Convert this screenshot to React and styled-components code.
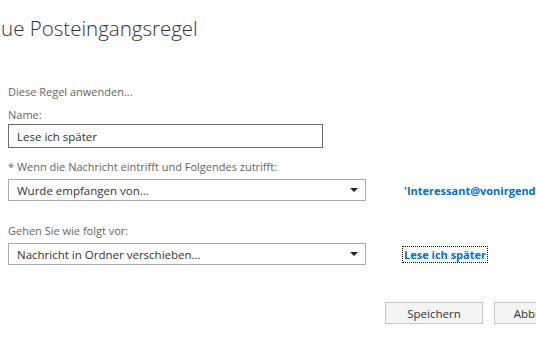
import styled, { createGlobalStyle } from 'styled-components';

const GlobalStyle = createGlobalStyle`
  html, body {
    margin: 0;
    padding: 0;
    background: #ffffff;
    overflow: hidden;
  }
  body {
    font-family: "Open Sans", "Noto Sans", "Liberation Sans", sans-serif;
  }
`;

function App() {
  return (
    <>
      <GlobalStyle />
      <Dialog>
        <Title>Neue Posteingangsregel</Title>
        <Form>
          <Hint>Diese Regel anwenden...</Hint>
          <Label>Name:</Label>
          <TextInput defaultValue="Lese ich später" />
          <Label $gap={11}>* Wenn die Nachricht eintrifft und Folgendes zutrifft:</Label>
          <Row>
            <Select>
              <span>Wurde empfangen von...</span>
              <Arrow />
            </Select>
            <ValueLink>'Interessant@vonirgendwo.de'</ValueLink>
          </Row>
          <Label $gap={22}>Gehen Sie wie folgt vor:</Label>
          <Row>
            <Select>
              <span>Nachricht in Ordner verschieben...</span>
              <Arrow />
            </Select>
            <ValueLink $focused>Lese ich später</ValueLink>
          </Row>
        </Form>
        <Buttons>
          <Button>Speichern</Button>
          <Button>Abbrechen</Button>
        </Buttons>
      </Dialog>
    </>
  );
}

export default App;

const Dialog = styled.div`
  width: 640px;
  padding: 14px 0 0 8px;
`;

const Title = styled.h1`
  margin: 0 0 0 -33px;
  font-family: "Open Sans", "Noto Sans", sans-serif;
  font-weight: 300;
  font-size: 20.5px;
  line-height: 28px;
  color: #333333;
  white-space: nowrap;
`;

const Form = styled.div`
  display: flex;
  flex-direction: column;
  margin-top: 42px;
`;

const Hint = styled.div`
  font-size: 11px;
  line-height: 16px;
  color: #666666;
`;

const Label = styled.div`
  margin-top: ${(p) => p.$gap || 7}px;
  margin-bottom: 1px;
  font-size: 11px;
  line-height: 16px;
  color: #666666;
`;

const TextInput = styled.input`
  box-sizing: border-box;
  width: 315px;
  height: 24px;
  margin: 0;
  padding: 0 8px;
  border: 1px solid #6b6b6b;
  border-radius: 0;
  font-family: inherit;
  font-size: 11.5px;
  color: #333333;
  outline: none;
`;

const Row = styled.div`
  display: flex;
  align-items: center;
  margin-top: 3px;
`;

const Select = styled.div`
  box-sizing: border-box;
  display: flex;
  align-items: center;
  justify-content: space-between;
  width: 358px;
  height: 22px;
  padding: 0 7px 0 8px;
  border: 1px solid #ababab;
  font-size: 11.5px;
  color: #333333;
`;

const Arrow = styled.i`
  width: 0;
  height: 0;
  border-left: 4px solid transparent;
  border-right: 4px solid transparent;
  border-top: 4px solid #222222;
`;

const ValueLink = styled.a`
  margin-left: 37px;
  padding: 0 1px;
  font-size: 11px;
  font-weight: 700;
  line-height: 15px;
  color: #0072c6;
  white-space: nowrap;
  outline: ${(p) => (p.$focused ? '1px dotted #111111' : 'none')};
  cursor: pointer;
`;

const Buttons = styled.div`
  display: flex;
  gap: 11px;
  margin: 37px 0 0 377px;
`;

const Button = styled.button`
  flex: none;
  width: 98px;
  height: 22px;
  padding: 0;
  background: #f4f4f4;
  border: 1px solid #c6c6c6;
  font-family: inherit;
  font-size: 11.5px;
  color: #333333;
`;
